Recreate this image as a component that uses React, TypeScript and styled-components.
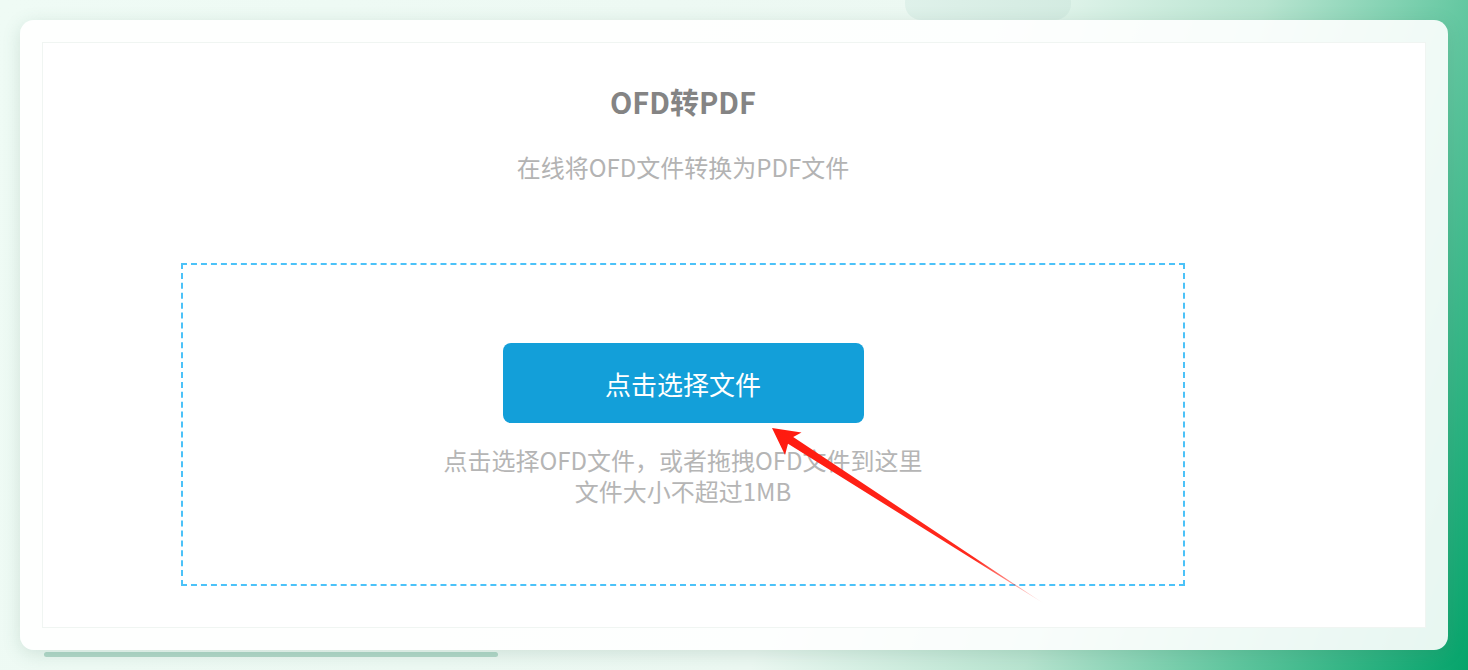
import React, { FC } from "react";
import styled, { createGlobalStyle } from "styled-components";

const GlobalStyle = createGlobalStyle`
    html, body {
        margin: 0;
        padding: 0;
        overflow: hidden;
    }
    body {
        font-family: "Noto Sans CJK SC", "Noto Sans", "Liberation Sans", sans-serif;
    }
`;

const Page = styled.div`
    position: relative;
    box-sizing: border-box;
    width: 1468px;
    height: 670px;
    padding: 20px 20px 0;
    overflow: hidden;
    background: linear-gradient(110deg, #effbf5 0%, #ecf8f2 58%, #b8e4d0 74%, #62c7a0 86%, #05a46b 100%);
`;

const TopPill = styled.div`
    position: absolute;
    top: -14px;
    left: 905px;
    width: 166px;
    height: 34px;
    border-radius: 16px;
    background: linear-gradient(100deg, #dff1ea, #d3ebe1);
`;

const Card = styled.div`
    position: relative;
    box-sizing: border-box;
    height: 630px;
    padding: 22px;
    border-radius: 14px;
    background: rgba(255, 255, 255, 0.9);
    box-shadow: 0 4px 18px rgba(70, 120, 100, 0.18);
`;

const Panel = styled.div`
    box-sizing: border-box;
    height: 100%;
    background: #ffffff;
    border: 1px solid #f0f5f2;
`;

const Column = styled.div`
    width: 1280px;
    display: flex;
    flex-direction: column;
    align-items: center;
`;

const Title = styled.h1`
    margin: 38px 0 0;
    font-size: 29px;
    line-height: 40px;
    font-weight: 700;
    color: #848484;
`;

const Subtitle = styled.p`
    margin: 30px 0 0;
    font-size: 24px;
    line-height: 32px;
    color: #b3b3b3;
`;

const DropZone = styled.div`
    box-sizing: border-box;
    width: 1004px;
    height: 323px;
    margin-top: 80px;
    padding-top: 78px;
    border: 2px dashed #4cc2f8;
    display: flex;
    flex-direction: column;
    align-items: center;
`;

const PickButton = styled.button`
    width: 361px;
    height: 80px;
    border: none;
    border-radius: 8px;
    background: #139fd9;
    color: #ffffff;
    font-family: inherit;
    font-size: 26px;
    cursor: pointer;
`;

const Hints = styled.div`
    margin-top: 21px;
    display: flex;
    flex-direction: column;
    align-items: center;
`;

const HintLine = styled.span`
    font-size: 24px;
    line-height: 31px;
    height: 31px;
    color: #b5b5b5;
    white-space: nowrap;
`;

const ScrollBar = styled.div`
    width: 454px;
    height: 5px;
    margin: 2px 0 0 24px;
    border-radius: 3px;
    background: #b2d8c9;
`;

const ArrowLayer = styled.svg`
    position: absolute;
    left: 0;
    top: 0;
    pointer-events: none;
`;

const Arrow: FC = () => (
    <ArrowLayer width="1468" height="670" viewBox="0 0 1468 670">
        <defs>
            <linearGradient id="arrowFade" x1="772" y1="428" x2="1043" y2="603" gradientUnits="userSpaceOnUse">
                <stop offset="0" stopColor="#ff1a0f" />
                <stop offset="0.75" stopColor="#ff2a1e" />
                <stop offset="1" stopColor="#ff2a1e" stopOpacity="0.1" />
            </linearGradient>
        </defs>
        <polygon
            points="772,428 801.5,432.5 793.2,437 1043,603 788,443.8 785,455"
            fill="url(#arrowFade)"
        />
    </ArrowLayer>
);

const App: FC = () => (
    <>
        <GlobalStyle />
        <Page>
            <TopPill />
            <Card>
                <Panel>
                    <Column>
                        <Title>OFD转PDF</Title>
                        <Subtitle>在线将OFD文件转换为PDF文件</Subtitle>
                        <DropZone>
                            <PickButton>点击选择文件</PickButton>
                            <Hints>
                                <HintLine>点击选择OFD文件，或者拖拽OFD文件到这里</HintLine>
                                <HintLine>文件大小不超过1MB</HintLine>
                            </Hints>
                        </DropZone>
                    </Column>
                </Panel>
            </Card>
            <ScrollBar />
            <Arrow />
        </Page>
    </>
);

export default App;
